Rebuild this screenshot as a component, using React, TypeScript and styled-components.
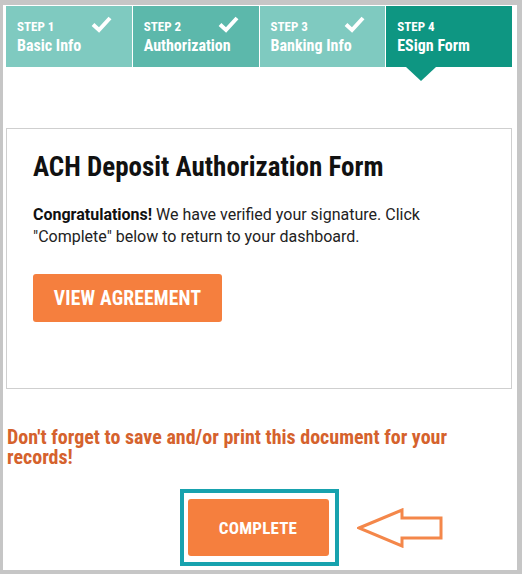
import styled, { createGlobalStyle } from "styled-components";

const GlobalStyle = createGlobalStyle`
  html, body {
    margin: 0;
    padding: 0;
    background: #c6c6c6;
  }
  * {
    box-sizing: border-box;
  }
`;

const Frame = styled.div`
  width: 514px;
  height: 565px;
  margin: 5px 0 0 3px;
  background: #ffffff;
  padding: 1px 5px 0 3px;
  font-family: Roboto, "Liberation Sans", sans-serif;
  display: flex;
  flex-direction: column;
`;

const Steps = styled.div`
  display: grid;
  grid-template-columns: repeat(4, 1fr);
  gap: 1px;
  height: 61px;
  background: #ffffff;
`;

const Step = styled.div<{ $tone: string }>`
  position: relative;
  background: ${(p) => p.$tone};
  color: #ffffff;
  padding: 13px 10px 0 11px;
  font-stretch: condensed;
`;

const StepNum = styled.div`
  font-size: 13px;
  font-weight: 700;
  line-height: 15px;
`;

const StepName = styled.div`
  font-size: 16px;
  font-weight: 700;
  line-height: 20px;
  margin-top: 2px;
`;

const Check = styled.svg`
  position: absolute;
  top: 9px;
  right: 20px;
  width: 21px;
  height: 18px;
`;

const Notch = styled.div`
  position: absolute;
  left: 20px;
  bottom: -14px;
  width: 0;
  height: 0;
  border-left: 15px solid transparent;
  border-right: 15px solid transparent;
  border-top: 14px solid #0e9682;
`;

const Card = styled.div`
  margin-top: 61px;
  height: 261px;
  border: 1px solid #cfcfcf;
  padding: 22px 26px 0 26px;
`;

const Title = styled.h1`
  margin: 0;
  font-size: 27px;
  font-weight: 700;
  font-stretch: condensed;
  color: #111111;
  line-height: 32px;
`;

const Text = styled.p`
  margin: 21px 0 0 0;
  font-size: 16px;
  line-height: 22px;
  color: #222222;

  b {
    font-weight: 700;
    color: #111111;
  }
`;

const OrangeButton = styled.button<{ $size: number }>`
  background: #f57f3e;
  color: #ffffff;
  border: none;
  border-radius: 3px;
  font-family: Roboto, "Liberation Sans", sans-serif;
  font-weight: 700;
  font-stretch: condensed;
  font-size: ${(p) => p.$size}px;
  letter-spacing: 0.2px;
  cursor: pointer;
`;

const ViewButton = styled(OrangeButton)`
  margin-top: 26px;
  width: 189px;
  height: 48px;
`;

const Warning = styled.p`
  margin: 38px 0 0 1px;
  max-width: 470px;
  font-size: 20px;
  line-height: 20px;
  font-weight: 700;
  font-stretch: condensed;
  color: #d5622d;
`;

const Bottom = styled.div`
  display: grid;
  grid-template-columns: 1fr auto 1fr;
  align-items: center;
  margin-top: 22px;
`;

const Highlight = styled.div`
  grid-column: 2;
  border: 4px solid #17a2ae;
  padding: 6px 6px 6px 4px;
`;

const CompleteButton = styled(OrangeButton)`
  display: block;
  width: 141px;
  height: 57px;
`;

const Arrow = styled.svg`
  margin-left: 18px;
  width: 86px;
  height: 40px;
`;

const steps = [
  { num: "STEP 1", name: "Basic Info", tone: "#7fcac0", done: true },
  { num: "STEP 2", name: "Authorization", tone: "#5cb8ab", done: true },
  { num: "STEP 3", name: "Banking Info", tone: "#7fcac0", done: true },
  { num: "STEP 4", name: "ESign Form", tone: "#0e9682", done: false },
];

function App() {
  return (
    <>
      <GlobalStyle />
      <Frame>
        <Steps>
          {steps.map((s) => (
            <Step key={s.num} $tone={s.tone}>
              <StepNum>{s.num}</StepNum>
              <StepName>{s.name}</StepName>
              {s.done ? (
                <Check viewBox="0 0 21 18">
                  <path
                    d="M2 9.5 L8 15 L19 3"
                    fill="none"
                    stroke="#ffffff"
                    strokeWidth="4"
                  />
                </Check>
              ) : (
                <Notch />
              )}
            </Step>
          ))}
        </Steps>
        <Card>
          <Title>ACH Deposit Authorization Form</Title>
          <Text>
            <b>Congratulations!</b> We have verified your signature. Click
            "Complete" below to return to your dashboard.
          </Text>
          <ViewButton $size={19.5}>VIEW AGREEMENT</ViewButton>
        </Card>
        <Warning>
          Don't forget to save and/or print this document for your records!
        </Warning>
        <Bottom>
          <Highlight>
            <CompleteButton $size={17}>COMPLETE</CompleteButton>
          </Highlight>
          <Arrow viewBox="0 0 86 40">
            <path
              d="M2 20 L45 2 L45 10 L84 10 L84 30 L45 30 L45 38 Z"
              fill="#ffffff"
              stroke="#f4874a"
              strokeWidth="3"
              strokeLinejoin="miter"
            />
          </Arrow>
        </Bottom>
      </Frame>
    </>
  );
}

export default App;
